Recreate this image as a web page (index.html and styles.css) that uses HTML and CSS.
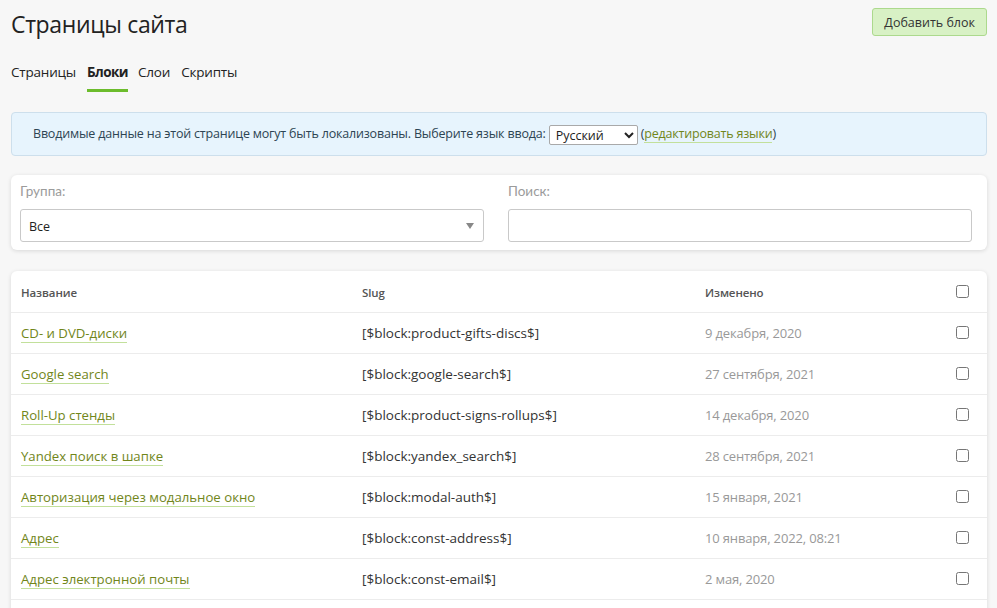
FILE: index.html
```html
<!DOCTYPE html>
<html lang="ru">
<head>
<meta charset="utf-8">
<title>Страницы сайта</title>
<link rel="stylesheet" href="styles.css">
</head>
<body>
<div class="page">
  <header class="top">
    <h1 class="title">Страницы сайта</h1>
    <button class="btn-add">Добавить блок</button>
  </header>
  <nav class="tabs">
    <a class="tab">Страницы</a>
    <a class="tab active">Блоки</a>
    <a class="tab">Слои</a>
    <a class="tab">Скрипты</a>
  </nav>
  <div class="info">
    Вводимые данные на этой странице могут быть локализованы. Выберите язык ввода:
    <select class="lang"><option>Русский</option></select>
    (<a class="link">редактировать языки</a>)
  </div>
  <div class="card filters">
    <div class="field">
      <label class="label">Группа:</label>
      <div class="fake-select">Все<span class="caret"></span></div>
    </div>
    <div class="field">
      <label class="label">Поиск:</label>
      <div class="input"></div>
    </div>
  </div>
  <div class="card list">
    <table class="tbl">
      <colgroup><col class="c1"><col class="c2"><col class="c3"><col class="c4"></colgroup>
      <thead>
        <tr><th>Название</th><th>Slug</th><th>Изменено</th><th class="chk"><input type="checkbox"></th></tr>
      </thead>
      <tbody>
        <tr><td class="name"><a class="link">CD- и DVD-диски</a></td><td class="slug">[$block:product-gifts-discs$]</td><td class="date">9 декабря, 2020</td><td class="chk"><input type="checkbox"></td></tr>
        <tr><td class="name"><a class="link">Google search</a></td><td class="slug">[$block:google-search$]</td><td class="date">27 сентября, 2021</td><td class="chk"><input type="checkbox"></td></tr>
        <tr><td class="name"><a class="link">Roll-Up стенды</a></td><td class="slug">[$block:product-signs-rollups$]</td><td class="date">14 декабря, 2020</td><td class="chk"><input type="checkbox"></td></tr>
        <tr><td class="name"><a class="link">Yandex поиск в шапке</a></td><td class="slug">[$block:yandex_search$]</td><td class="date">28 сентября, 2021</td><td class="chk"><input type="checkbox"></td></tr>
        <tr><td class="name"><a class="link">Авторизация через модальное окно</a></td><td class="slug">[$block:modal-auth$]</td><td class="date">15 января, 2021</td><td class="chk"><input type="checkbox"></td></tr>
        <tr><td class="name"><a class="link">Адрес</a></td><td class="slug">[$block:const-address$]</td><td class="date">10 января, 2022, 08:21</td><td class="chk"><input type="checkbox"></td></tr>
        <tr><td class="name"><a class="link">Адрес электронной почты</a></td><td class="slug">[$block:const-email$]</td><td class="date">2 мая, 2020</td><td class="chk"><input type="checkbox"></td></tr>
        <tr><td class="name"><a class="link">Баннер</a></td><td class="slug">[$block:banner$]</td><td class="date">2 мая, 2020</td><td class="chk"><input type="checkbox"></td></tr>
      </tbody>
    </table>
  </div>
</div>
</body>
</html>
```
FILE: styles.css
```css
html, body {
  margin: 0;
  padding: 0;
  background: #f7f7f7;
  font-family: "Open Sans", "Noto Sans", sans-serif;
  font-size: 13px;
  color: #333;
}
.page {
  padding: 8px 10px 0 11px;
}
.top {
  display: flex;
  justify-content: space-between;
  align-items: flex-start;
}
.title {
  margin: 0;
  font-weight: 400;
  font-size: 23px;
  line-height: 32px;
  color: #222;
  letter-spacing: -0.35px;
}
.btn-add {
  font-family: inherit;
  font-size: 12.5px;
  color: #333;
  background: #d8f1c5;
  border: 1px solid #acd98d;
  border-radius: 3px;
  height: 28px;
  padding: 0 11px;
}
.tabs {
  display: flex;
  gap: 11px;
  margin-top: 23px;
}
.tab {
  font-size: 13.5px;
  color: #222;
  padding-bottom: 8px;
  border-bottom: 3px solid transparent;
  letter-spacing: -0.2px;
}
.tab.active {
  font-weight: 700;
  letter-spacing: -0.55px;
  margin-right: -1px;
  border-bottom-color: #6cbc2c;
}
.info {
  margin-top: 20px;
  background: #e7f4fd;
  border: 1px solid #cddfec;
  border-radius: 4px;
  padding: 10px 21px;
  height: 22px;
  line-height: 22px;
  font-size: 12.5px;
  color: #2d4453;
  letter-spacing: -0.19px;
}
.lang {
  font-family: inherit;
  font-size: 12.5px;
  width: 89px;
  height: 20px;
  border: 1px solid #a9a9a9;
  border-radius: 2px;
  background: #fff;
  color: #222;
  padding: 0 2px;
  vertical-align: middle;
}
.link {
  color: #71861a;
  text-decoration: none;
  border-bottom: 1px solid #c2e09b;
}
.card {
  background: #fff;
  border-radius: 6px;
  box-shadow: 0 1px 4px rgba(0, 0, 0, 0.13);
}
.filters {
  margin-top: 19px;
  display: flex;
  gap: 24px;
  padding: 8px 15px 8px 9px;
}
.field {
  flex: 1;
}
.label {
  display: block;
  font-family: Lato, "Open Sans", sans-serif;
  font-size: 13.5px;
  color: #9b9b9b;
  line-height: 17px;
  margin-bottom: 9px;
}
.fake-select, .input {
  height: 31px;
  border: 1px solid #c9c9c9;
  border-radius: 3px;
  box-sizing: content-box;
}
.fake-select {
  position: relative;
  line-height: 34px;
  padding-left: 8px;
  font-size: 12.5px;
  color: #222;
}
.caret {
  position: absolute;
  right: 9px;
  top: 13px;
  border-left: 4px solid transparent;
  border-right: 4px solid transparent;
  border-top: 6px solid #888;
}
.list {
  margin-top: 21px;
  overflow: hidden;
  border-bottom-left-radius: 0;
  border-bottom-right-radius: 0;
}
.tbl {
  width: 100%;
  border-collapse: collapse;
  table-layout: fixed;
}
.c1 { width: 341px; }
.c2 { width: 343px; }
.c4 { width: 41px; }
.tbl th, .tbl td {
  text-align: left;
  padding: 0 10px;
  height: 40px;
  border-bottom: 1px solid #ececec;
  white-space: nowrap;
}
.tbl th {
  font-size: 11.5px;
  font-weight: 600;
  color: #555;
  letter-spacing: -0.1px;
  padding-top: 1px;
}
.tbl td {
  font-size: 13px;
  color: #333;
}
.tbl td.name {
  font-size: 13.2px;
}
.tbl td.slug {
  font-size: 13.5px;
  color: #333;
}
.tbl td.date {
  color: #999;
  letter-spacing: -0.15px;
}
.tbl .chk {
  padding-left: 10px;
}
.tbl input[type="checkbox"] {
  width: 13px;
  height: 13px;
  margin: 0;
  vertical-align: middle;
  position: relative;
  top: -2px;
}
```
